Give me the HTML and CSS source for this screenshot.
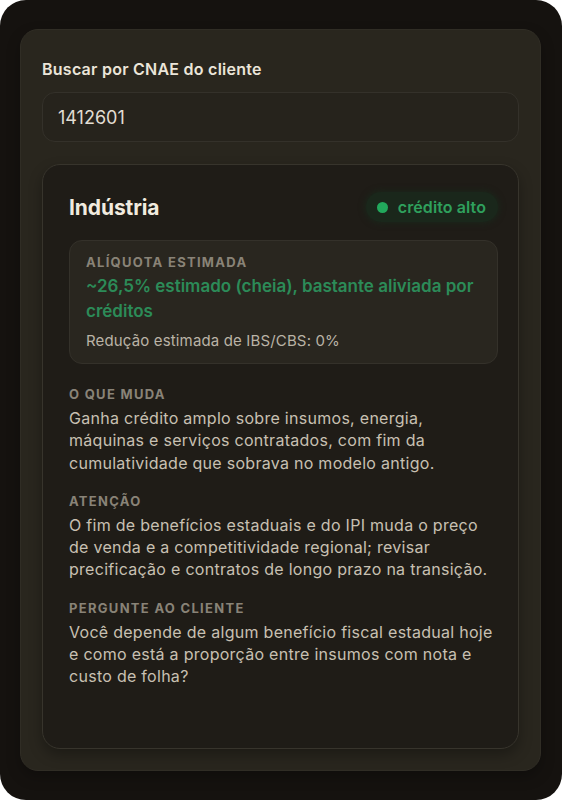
FILE: index.html
```html
<!DOCTYPE html>
<html lang="pt-BR">
<head>
<meta charset="utf-8">
<title>CNAE</title>
<link rel="stylesheet" href="styles.css">
</head>
<body>
<div class="frame">
  <div class="panel">
    <div class="field-label">Buscar por CNAE do cliente</div>
    <div class="input">1412601</div>
    <div class="card">
      <div class="card-head">
        <div class="card-title">Indústria</div>
        <div class="badge"><span class="dot"></span>crédito alto</div>
      </div>
      <div class="rate">
        <div class="label">ALÍQUOTA ESTIMADA</div>
        <div class="rate-value">~26,5% estimado (cheia), bastante aliviada por créditos</div>
        <div class="rate-note">Redução estimada de IBS/CBS: 0%</div>
      </div>
      <div class="section">
        <div class="label">O QUE MUDA</div>
        <p class="body">Ganha crédito amplo sobre insumos, energia, máquinas e serviços contratados, com fim da cumulatividade que sobrava no modelo antigo.</p>
      </div>
      <div class="section">
        <div class="label">ATENÇÃO</div>
        <p class="body">O fim de benefícios estaduais e do IPI muda o preço de venda e a competitividade regional; revisar precificação e contratos de longo prazo na transição.</p>
      </div>
      <div class="section">
        <div class="label">PERGUNTE AO CLIENTE</div>
        <p class="body">Você depende de algum benefício fiscal estadual hoje e como está a proporção entre insumos com nota e custo de folha?</p>
      </div>
    </div>
  </div>
</div>
</body>
</html>
```
FILE: styles.css
```css
html, body {
  margin: 0;
  padding: 0;
  background: #ffffff;
}
body {
  font-family: Inter, "Noto Sans", "Liberation Sans", sans-serif;
}
.frame {
  width: 562px;
  height: 800px;
  box-sizing: border-box;
  background: #15120f;
  border-radius: 26px;
  padding: 29px 21px 29px 20px;
  display: flex;
}
.panel {
  flex: 1;
  background: #29261e;
  border: 1px solid #302d25;
  border-radius: 18px;
  padding: 29px 21px 21px 21px;
  display: flex;
  flex-direction: column;
  box-shadow: 0 6px 14px rgba(0,0,0,0.25);
}
.field-label {
  font-size: 16px;
  font-weight: 600;
  line-height: 20px;
  letter-spacing: 0.25px;
  color: #ebe5d9;
}
.input {
  margin-top: 13px;
  height: 50px;
  box-sizing: border-box;
  border: 1px solid #34312a;
  background: #26231c;
  border-radius: 13px;
  padding: 0 15px;
  display: flex;
  align-items: center;
  font-size: 18px;
  color: #e2ddd3;
}
.card {
  margin-top: 22px;
  flex: 1;
  background: #1f1c17;
  border: 1px solid #37342c;
  border-radius: 18px;
  padding: 27px 20px 27px 26px;
  box-shadow: 0 6px 14px rgba(0,0,0,0.3);
}
.card-head {
  display: flex;
  justify-content: space-between;
  align-items: center;
  height: 30px;
}
.card-title {
  font-size: 21px;
  font-weight: 700;
  color: #f1ebdf;
  letter-spacing: -0.1px;
}
.badge {
  display: flex;
  align-items: center;
  gap: 10px;
  height: 30px;
  padding: 0 12px 0 11px;
  border-radius: 15px;
  background: #1a271b;
  box-shadow: 0 0 6px 1px #1a271b;
  color: #2fa05d;
  font-size: 16px;
  font-weight: 600;
  letter-spacing: 0.1px;
}
.dot {
  width: 11px;
  height: 11px;
  border-radius: 50%;
  background: #22a85c;
}
.rate {
  margin-top: 18px;
  background: #29261f;
  border: 1px solid #34312a;
  border-radius: 13px;
  padding: 12px 16px 11px 16px;
}
.label {
  font-size: 13px;
  font-weight: 700;
  letter-spacing: 1.3px;
  line-height: 18px;
  color: #898377;
}
.rate-value {
  margin-top: 3px;
  font-size: 17px;
  font-weight: 600;
  line-height: 25px;
  color: #2c8b58;
}
.rate-note {
  margin-top: 6px;
  font-size: 15px;
  line-height: 22px;
  letter-spacing: 0.15px;
  color: #bab3a6;
}
.section {
  margin-top: 21px;
}
.section + .section {
  margin-top: 18px;
}
.body {
  margin: 4px 0 0 0;
  font-size: 16px;
  line-height: 22.3px;
  letter-spacing: 0.28px;
  color: #c8c0b2;
}
```
